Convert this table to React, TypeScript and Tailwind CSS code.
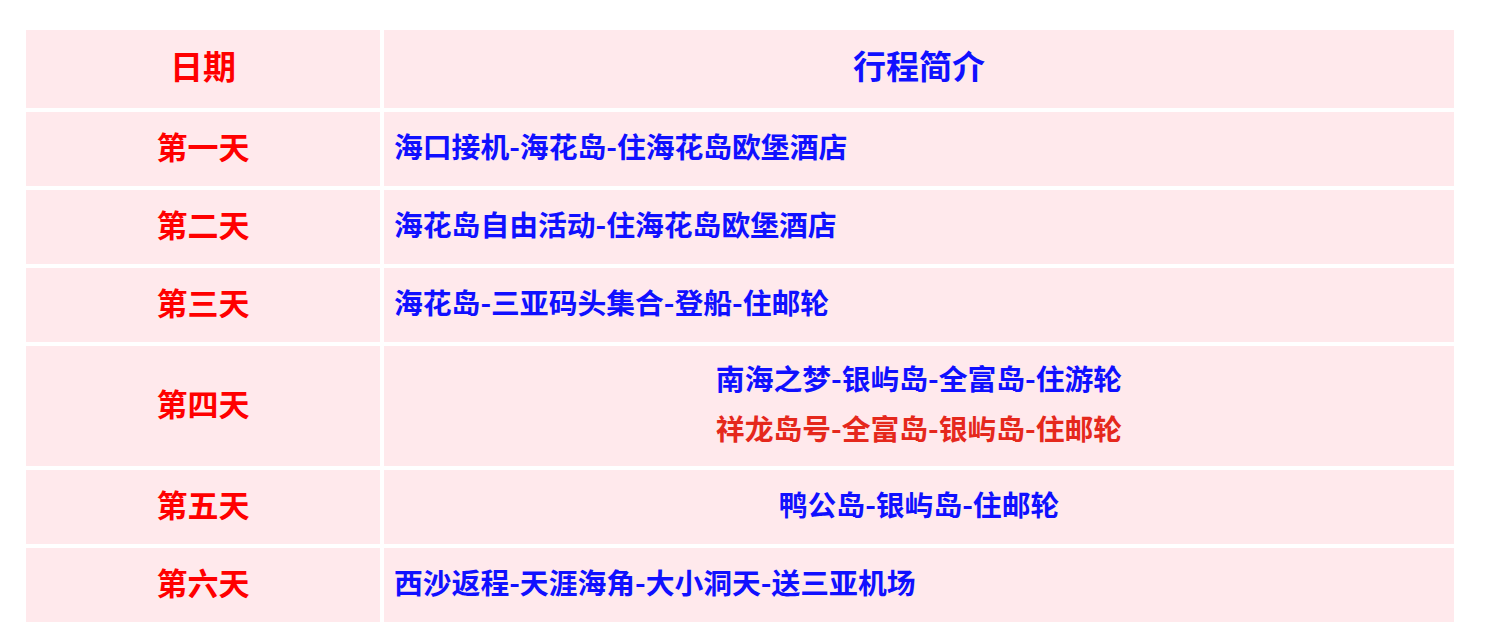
const rows: { day: string; lines: { text: string; red?: boolean }[]; center?: boolean; tall?: boolean }[] = [
  { day: '第一天', lines: [{ text: '海口接机-海花岛-住海花岛欧堡酒店' }] },
  { day: '第二天', lines: [{ text: '海花岛自由活动-住海花岛欧堡酒店' }] },
  { day: '第三天', lines: [{ text: '海花岛-三亚码头集合-登船-住邮轮' }] },
  {
    day: '第四天',
    center: true,
    tall: true,
    lines: [{ text: '南海之梦-银屿岛-全富岛-住游轮' }, { text: '祥龙岛号-全富岛-银屿岛-住邮轮', red: true }],
  },
  { day: '第五天', center: true, lines: [{ text: '鸭公岛-银屿岛-住邮轮' }] },
  { day: '第六天', lines: [{ text: '西沙返程-天涯海角-大小洞天-送三亚机场' }] },
];

export default function App() {
  return (
    <div className="min-h-screen bg-white pt-[30px] pl-[26px] font-['Noto_Sans_CJK_SC',sans-serif] font-bold">
      <div className="grid w-[1428px] grid-cols-[354px_1070px] gap-[4px]">
        {/* header */}
        <div className="flex h-[78px] items-center justify-center bg-[#ffe9ec] pb-[7px] text-[33px] text-[#ff0000]">日期</div>
        <div className="flex h-[78px] items-center justify-center bg-[#ffe9ec] pb-[7px] text-[33px] text-[#1010ff]">行程简介</div>

        {rows.map((r) => (
          <div key={r.day} className="contents">
            <div
              className={`flex items-center justify-center bg-[#ffe9ec] pb-[6px] text-[31px] text-[#ff0000] ${
                r.tall ? 'h-[120px]' : 'h-[74px]'
              }`}
            >
              {r.day}
            </div>
            <div
              className={`flex flex-col justify-center bg-[#ffe9ec] pb-[6px] text-[28.8px] leading-[50px] ${
                r.tall ? 'h-[120px]' : 'h-[74px]'
              } ${r.center ? 'items-center' : 'items-start pl-[10px]'}`}
            >
              {r.lines.map((l) => (
                <div key={l.text} className={l.red ? 'text-[#e5281c]' : 'text-[#1010ff]'}>
                  {l.text}
                </div>
              ))}
            </div>
          </div>
        ))}
      </div>
    </div>
  );
}
